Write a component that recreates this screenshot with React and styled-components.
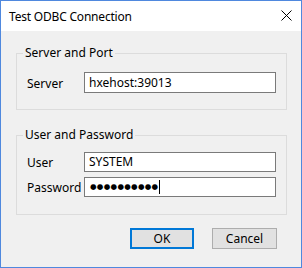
import React from 'react';
import styled, { createGlobalStyle } from 'styled-components';

const GlobalStyle = createGlobalStyle`
  html, body {
    margin: 0;
    padding: 0;
    background: #ffffff;
  }
  body {
    font-family: "Noto Sans", "Open Sans", sans-serif;
    font-size: 12px;
    color: #000;
  }
`;

const Window = styled.div`
  width: 302px;
  height: 268px;
  box-sizing: border-box;
  border: 1px solid #4f88de;
  background: #f0f0f0;
  display: flex;
  flex-direction: column;
`;

const TitleBar = styled.div`
  height: 30px;
  background: #ffffff;
  display: flex;
  align-items: center;
  justify-content: space-between;
  padding: 0 9px 0 8px;
  flex-shrink: 0;
`;

const Title = styled.div`
  font-size: 12px;
  line-height: 16px;
  padding-top: 1px;
  letter-spacing: -0.2px;
`;

const CloseButton = styled.div`
  width: 12px;
  height: 12px;
  display: flex;
  align-items: center;
  justify-content: center;
  margin-top: -1px;
`;

const Body = styled.div`
  padding: 14px 14px 0 15px;
  display: flex;
  flex-direction: column;
`;

const Group = styled.fieldset`
  margin: ${p => p.$top}px 0 0 0;
  border: 1px solid #dcdcdc;
  padding: ${p => p.$padTop}px 10px ${p => p.$padBottom}px 10px;
  min-inline-size: 0;
  display: flex;
  flex-direction: column;
  gap: 5px;
`;

const Legend = styled.legend`
  padding: 0 2px;
  margin-left: -4px;
  line-height: 16px;
  font-size: 12px;
`;

const Row = styled.div`
  display: flex;
  align-items: center;
`;

const Label = styled.div`
  width: 57px;
  flex-shrink: 0;
  line-height: 16px;
  padding-top: 2px;
`;

const Field = styled.div`
  flex: 1;
  height: ${p => p.$h || 20}px;
  box-sizing: border-box;
  border: 1px solid #7a7a7a;
  background: #ffffff;
  display: flex;
  align-items: center;
  padding: 0 4px;
  line-height: 16px;
`;

const Dots = styled.span`
  font-family: "DejaVu Sans", sans-serif;
  font-size: 7.5px;
  letter-spacing: 0.3px;
  line-height: 16px;
  padding-left: 1px;
`;

const Caret = styled.span`
  display: inline-block;
  width: 1px;
  height: 14px;
  background: #000;
  margin-left: 1px;
`;

const Buttons = styled.div`
  display: flex;
  justify-content: flex-end;
  gap: 18px;
  margin-top: 13px;
  padding-right: 10px;
`;

const Button = styled.div`
  width: ${p => p.$w}px;
  height: 21px;
  box-sizing: border-box;
  background: #e1e1e1;
  border: ${p => (p.$primary ? '2px solid #0078d7' : '1px solid #adadad')};
  display: flex;
  align-items: center;
  justify-content: center;
  line-height: 16px;
`;

export default function App() {
  return (
    <>
      <GlobalStyle />
      <Window>
        <TitleBar>
          <Title>Test ODBC Connection</Title>
          <CloseButton>
            <svg width="11" height="11" viewBox="0 0 11 11">
              <path d="M0.5 0.5 L10.5 10.5 M10.5 0.5 L0.5 10.5" stroke="#000" strokeWidth="1" />
            </svg>
          </CloseButton>
        </TitleBar>
        <Body>
          <Group $top={0} $padTop={11} $padBottom={16}>
            <Legend>Server and Port</Legend>
            <Row>
              <Label>Server</Label>
              <Field $h={21}>hxehost:39013</Field>
            </Row>
          </Group>
          <Group $top={17} $padTop={9} $padBottom={17}>
            <Legend>User and Password</Legend>
            <Row>
              <Label>User</Label>
              <Field>SYSTEM</Field>
            </Row>
            <Row>
              <Label>Password</Label>
              <Field>
                <Dots>●●●●●●●●●●</Dots>
                <Caret />
              </Field>
            </Row>
          </Group>
          <Buttons>
            <Button $primary $w={64}>OK</Button>
            <Button $w={65}>Cancel</Button>
          </Buttons>
        </Body>
      </Window>
    </>
  );
}
